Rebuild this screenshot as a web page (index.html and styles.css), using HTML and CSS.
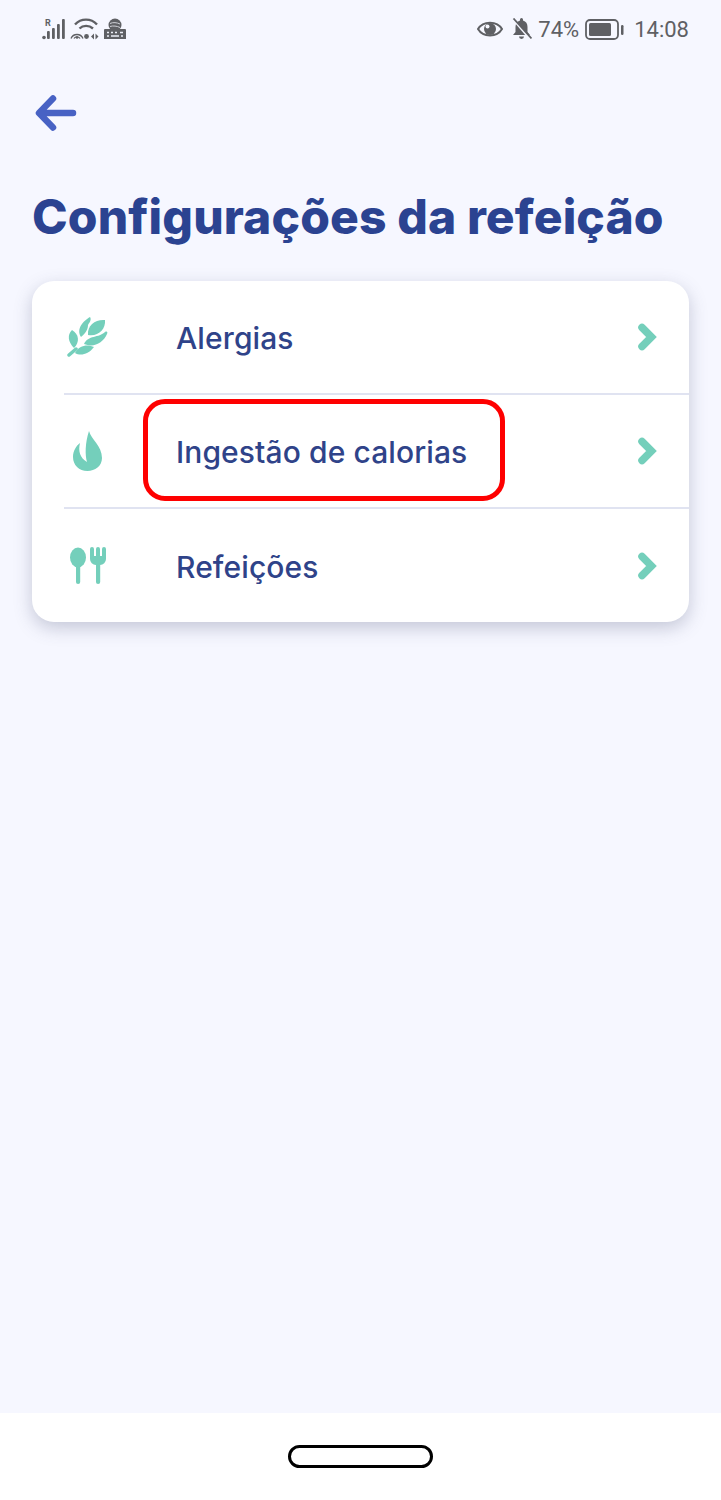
FILE: index.html
```html
<!DOCTYPE html>
<html lang="pt">
<head>
<meta charset="utf-8">
<title>Configurações da refeição</title>
<link rel="stylesheet" href="styles.css">
</head>
<body>
<div class="screen">
  <header class="status">
    <div class="status-left">
      <svg width="25" height="22" viewBox="0 0 25 22"><text x="3" y="8" class="s-r">R</text><g fill="#5f6064"><circle cx="2" cy="19.500" r="1.800"/><rect x="5" y="13" width="2.800" height="8" rx="1"/><rect x="10" y="10" width="2.800" height="11" rx="1"/><rect x="15" y="6" width="2.800" height="15" rx="1"/><rect x="20" y="1" width="2.800" height="20" rx="1"/></g></svg>
      <svg width="30" height="22" viewBox="0 0 30 22"><g fill="none" stroke="#5f6064"><path d="M5 6.500C11 0 21 0 27 6.500" stroke-width="2.400"/><path d="M9.500 10.500C13 7 19 7 23 10.500" stroke-width="2.400"/><path d="M1 20.500a6.500 6.500 0 0 1 12 0" stroke-width="1.300"/><path d="M4 20.500a3.500 3.500 0 0 1 6 0" stroke-width="1.300"/></g><g fill="#5f6064"><circle cx="7" cy="19.500" r="1.300"/><circle cx="16.500" cy="18.500" r="2.400"/><path d="M21 18.500l3-3v6zM25.500 15.500l3 3-3 3z"/></g></svg>
      <svg width="24" height="22" viewBox="0 0 24 22"><circle cx="12" cy="7" r="6.500" fill="#5f6064"/><path d="M7 5.500c3-1.500 7-1 10 .500M7 8.500c3-1 7-.5 10 1" fill="none" stroke="#cfd0d6" stroke-width="1"/><path d="M2 11h20a1 1 0 0 1 1 1v9H1v-9a1 1 0 0 1 1-1z" fill="#5f6064"/><path d="M4 14.500h2M8 14.500h2M12 14.500h2M17 14.500h3M4 18h2M8 18h8M18 18h2" stroke="#eceef6" stroke-width="1.500"/></svg>
    </div>
    <div class="status-right">
      <svg width="26" height="18" viewBox="0 0 26 18"><path d="M1 9C6 .5 20 .5 25 9C20 17.500 6 17.500 1 9Z" fill="none" stroke="#5f6064" stroke-width="2"/><circle cx="13" cy="9" r="6" fill="#5f6064"/><circle cx="10.500" cy="6.500" r="2" fill="#f6f7ff"/></svg>
      <svg class="bell" width="22" height="22" viewBox="0 0 22 22"><path d="M10 1.500a1.500 1.500 0 0 1 3 0v1c3 .8 4.500 3.300 4.500 6.500v5l2.500 3H3l2.500-3V9c0-3.200 1.500-5.700 4.500-6.500zM9 18.500h5a2.500 2.500 0 0 1-5 0z" fill="#5f6064"/><path d="M2 0l18 21" stroke="#f6f7ff" stroke-width="2"/><path d="M3.500 0.500l18 20" stroke="#5f6064" stroke-width="1.800"/></svg>
      <span class="pct">74%</span>
      <svg class="batt" width="39" height="21" viewBox="0 0 39 21"><rect x="1" y="1" width="32" height="19" rx="4" fill="none" stroke="#5f6064" stroke-width="1.800"/><rect x="4" y="4" width="22" height="13" rx="1.500" fill="#5f6064"/><rect x="36" y="6" width="2.500" height="10" rx="1.200" fill="#5f6064"/></svg>
      <span class="time">14:08</span>
    </div>
  </header>

  <main class="content">
    <button class="back" aria-label="Voltar">
      <svg width="42" height="36" viewBox="0 0 42 36"><path d="M18 3.500L4 18L18 32.500M5 18H38" fill="none" stroke="#4862c4" stroke-width="6.500" stroke-linecap="round" stroke-linejoin="round"/></svg>
    </button>
    <h1 class="title">Configurações da refeição</h1>

    <section class="card">
      <div class="row">
        <span class="row-icon">
          <svg width="42" height="40" viewBox="0 0 42 40"><g fill="#74cfbb"><path d="M2 38L9 32" stroke="#74cfbb" stroke-width="3.500" stroke-linecap="round"/><path d="M7 31C1 25 0 18 5 13C12 17 13 25 7 31Z"/><path d="M14 20C9 12 16 4 23 0C25 3 22 6 21 8C21 12 19 16 14 20Z"/><path d="M21 18C20 8 29 2 38 3C39 12 31 20 21 18Z"/><path d="M17 27C21 18 32 21 38 15C40 14 41 15 40 17C36 26 27 31 17 27Z"/><path d="M8 36C12 28 21 27 27 30C21 38 13 39 8 36Z"/></g></svg>
        </span>
        <span class="row-label">Alergias</span>
        <svg class="chev" width="20" height="30" viewBox="0 0 20 30"><path d="M5 5.500L14.500 15L5 24.500" fill="none" stroke="#74cfbb" stroke-width="7.500" stroke-linecap="round"/></svg>
      </div>
      <div class="row">
        <span class="row-icon">
          <svg width="30" height="41" viewBox="0 0 30 41"><path d="M16 0C18 8 29 15 29 27C29 35 22 40 14.500 40C6 40 0 34 0 26C0 20 3 15 7 12C5 20 7 27 14 31C12 24 12 12 16 0Z" fill="#74cfbb"/></svg>
        </span>
        <span class="row-label">Ingestão de calorias</span>
        <svg class="chev" width="20" height="30" viewBox="0 0 20 30"><path d="M5 5.500L14.500 15L5 24.500" fill="none" stroke="#74cfbb" stroke-width="7.500" stroke-linecap="round"/></svg>
      </div>
      <div class="row row-last">
        <span class="row-icon">
          <svg width="38" height="37" viewBox="0 0 38 37"><g fill="#74cfbb"><ellipse cx="9" cy="10.500" rx="8" ry="10"/><rect x="7" y="16" width="4.200" height="21" rx="2.100"/><rect x="27" y="10" width="4.200" height="27" rx="2.100"/><path d="M21 2a2 2 0 0 1 4 0V9h2V2a2 2 0 0 1 4 0V9h2V2a2 2 0 0 1 4 0V12a6 6 0 0 1-6 6h-4a6 6 0 0 1-6-6z"/></g></svg>
        </span>
        <span class="row-label">Refeições</span>
        <svg class="chev" width="20" height="30" viewBox="0 0 20 30"><path d="M5 5.500L14.500 15L5 24.500" fill="none" stroke="#74cfbb" stroke-width="7.500" stroke-linecap="round"/></svg>
      </div>
      <div class="highlight"></div>
    </section>
  </main>

  <footer class="navbar"><span class="home-pill"></span></footer>
</div>
</body>
</html>
```

FILE: styles.css
```css
* { box-sizing: border-box; }
html, body { margin: 0; padding: 0; }
body { background: #f6f7ff; font-family: Inter, "Liberation Sans", sans-serif; }
.screen { width: 721px; height: 1500px; display: flex; flex-direction: column; }

.status { height: 58px; padding: 17px 32px 0 42px; display: flex; justify-content: space-between; align-items: flex-start; color: #5f6064; }
.status-left { display: flex; gap: 3px; align-items: center; height: 24px; }
.status-right { display: flex; align-items: center; height: 24px; font-family: Roboto, sans-serif; font-size: 22px; }
.s-r { font-size: 9px; font-weight: 700; fill: #5f6064; font-family: Roboto, sans-serif; }
.bell { margin-left: 7px; }
.pct { margin-left: 6px; }
.batt { margin-left: 6px; }
.time { margin-left: 10px; }

.content { flex: 1; padding: 37px 0 0 32px; }
.back { display: block; border: 0; background: none; padding: 0; margin: 0 0 0 3px; height: 36px; }
.back svg { display: block; }
.title { margin: 53px 0 0; font: 800 48px/66px Inter, sans-serif; letter-spacing: .12px; color: #2b4391; white-space: nowrap; }

.card { position: relative; width: 657px; margin-top: 31px; background: #fff; border-radius: 22px; padding-left: 32px; box-shadow: 0 6px 18px rgba(70, 75, 110, .28); }
.row { height: 114px; display: flex; align-items: center; padding-right: 32px; border-bottom: 2px solid #e0e3f1; }
.row-last { border-bottom: 0; height: 113px; }
.row-icon { width: 48px; display: flex; justify-content: center; margin-right: 64px; }
.row-icon svg { display: block; }
.row-label { flex: 1; padding-top: 2px; font: 500 30px/40px Inter, sans-serif; letter-spacing: .1px; color: #2f4389; }
.chev { display: block; }

.highlight { position: absolute; left: 111px; top: 118px; width: 362px; height: 102px; border: 5px solid #fe0000; border-radius: 22px; }

.navbar { height: 87px; background: #fff; display: flex; justify-content: center; padding-top: 32px; }
.home-pill { width: 145px; height: 23px; border: 3px solid #000; border-radius: 12px; }
```
